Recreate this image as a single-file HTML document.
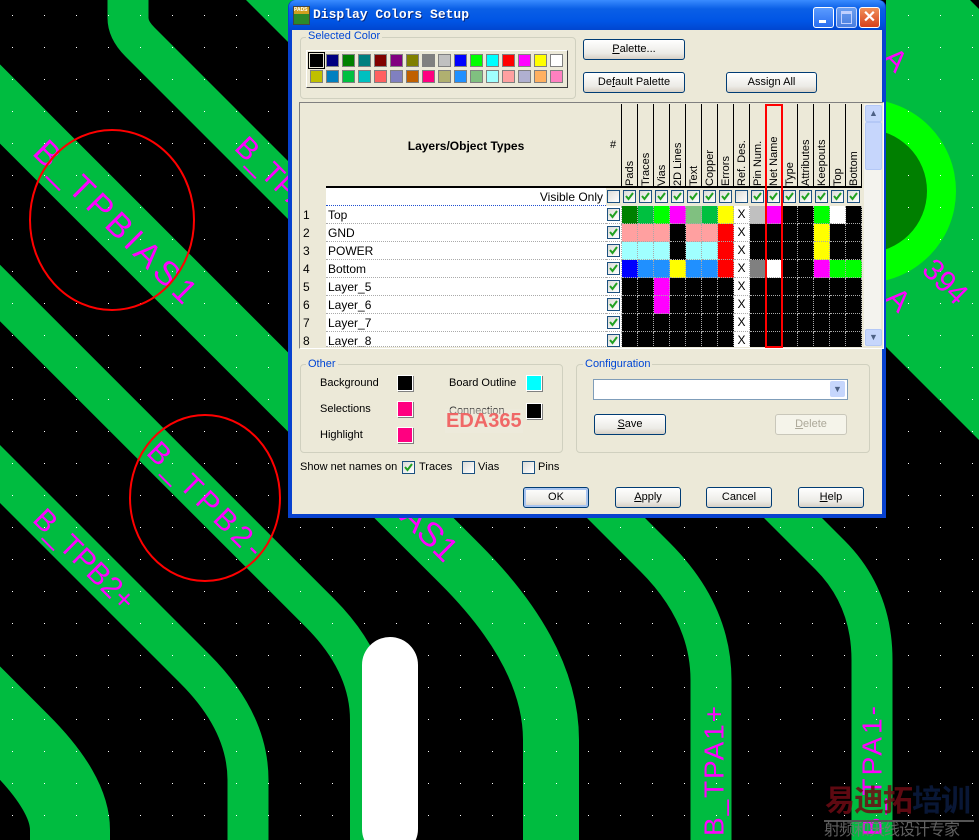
<!DOCTYPE html>
<html><head><meta charset="utf-8"><style>
*{margin:0;padding:0}
body{width:979px;height:840px;overflow:hidden;background:#000;position:relative;font-family:"Liberation Sans","Noto Sans CJK SC",sans-serif;font-size:11px}
.a{position:absolute;white-space:nowrap}
.btn{position:absolute;height:19px;border:1px solid #003c74;border-radius:3px;background:linear-gradient(#fff,#ecebe6 70%,#d6d0c5);font-size:11px;text-align:center;line-height:19px;color:#000}
.sw{position:absolute;width:14px;height:14px;border:1px solid #fff;box-shadow:1px 1px 0 #808080}
.pc{position:absolute;width:13px;height:13px}
.grp{position:absolute;border:1px solid #d0d0bf;border-radius:4px}
.lg{position:absolute;background:#ece9d8;color:#0046d5;padding:0 2px;font-size:11px}
.cb{position:absolute;width:11px;height:11px;border:1px solid #1c5180;background:linear-gradient(135deg,#dcdcd7,#fff)}
.row{position:absolute;left:606px;height:18px;display:flex}
.c{width:16px;height:18px;box-sizing:border-box;border-right:1px dotted #aaa;border-bottom:1px dotted #aaa;position:relative;font-size:12px;text-align:center;line-height:17px}
.vh{position:absolute;top:104px;width:16px;height:82px;writing-mode:vertical-rl;transform:rotate(180deg);font-size:11px;line-height:16px;text-align:left;white-space:nowrap;border-left:1px solid #000;box-sizing:border-box}
</style></head><body>
<svg class="a" style="left:0;top:0" width="979" height="840">
<defs><pattern id="d" x="12" y="15" width="32" height="32" patternUnits="userSpaceOnUse"><rect width="1" height="1" fill="#fff"/></pattern></defs>
<g fill="none" stroke="#00bc40" stroke-linejoin="round">
<path d="M128,-20 L128,18 Q128,30 140,42 L655,557 Q711,613 711,680 L711,860" stroke-width="41"/>
<path d="M-30,74 L460,564 Q551,655 551,740 L551,860" stroke-width="56"/>
<path d="M-30,263 L320,613 Q370,663 370,720 L370,860" stroke-width="40"/>
<path d="M-30,444 L195,669 Q248,722 248,780 L248,860" stroke-width="41"/>
<path d="M-60,663 L20,743 Q70,793 70,830 L70,860" stroke-width="80"/>
<path d="M245,-30 L830,555 Q872,597 872,660 L872,860" stroke-width="41"/>
</g>
<polygon points="886,0 970,0 979,9 979,440 886,347" fill="#00bc40"/>
<circle cx="864" cy="191" r="92" fill="#00ff00"/>
<circle cx="865" cy="191" r="62" fill="#007f00"/>
<rect x="362" y="637" width="56" height="220" rx="28" fill="#fff"/>
<rect width="979" height="840" fill="url(#d)"/>
<g fill="#ff00ff" font-family="Liberation Sans,sans-serif" dominant-baseline="central">
<text x="115" y="222" font-size="34" text-anchor="middle" textLength="215" transform="rotate(45 115 222)">B_TPBIAS1</text>
<text x="205" y="500" font-size="30" text-anchor="middle" textLength="150" transform="rotate(45 205 500)">B_TPB2-</text>
<text x="84" y="560" font-size="30" text-anchor="middle" textLength="130" transform="rotate(45 84 560)">B_TPB2+</text>
<text x="240" y="142" font-size="30" transform="rotate(45 240 142)">B_TPA</text>
<text x="452" y="556" font-size="34" text-anchor="end" transform="rotate(45 452 556)">B_TPBIAS1</text>
<text x="714" y="836" font-size="28" textLength="130" transform="rotate(-90 714 836)">B_TPA1+</text>
<text x="872" y="836" font-size="28" textLength="130" transform="rotate(-90 872 836)">B_TPA1-</text>
<text x="945" y="282" font-size="30" text-anchor="middle" transform="rotate(45 945 282)">394</text>
<text x="895" y="60" font-size="30" text-anchor="middle" transform="rotate(45 895 60)">A</text>
<text x="898" y="300" font-size="30" text-anchor="middle" transform="rotate(45 898 300)">A</text>
</g>
<ellipse cx="112" cy="220" rx="82" ry="90" fill="none" stroke="#f00" stroke-width="2"/>
<ellipse cx="205" cy="498" rx="75" ry="83" fill="none" stroke="#f00" stroke-width="2"/>
</svg>
<div class="a" style="left:825px;top:784px;font-size:30px;font-weight:bold;letter-spacing:-1px;line-height:36px"><span style="color:rgba(110,10,20,.85)">易迪拓</span><span style="color:rgba(10,25,60,.9)">培训</span></div>
<div class="a" style="left:824px;top:820px;width:150px;height:2px;background:#555"></div>
<div class="a" style="left:824px;top:822px;font-size:16px;line-height:18px;color:rgba(120,120,120,.8);letter-spacing:-1px">射频和天线设计专家</div>

<!-- dialog -->
<div class="a" style="left:288px;top:0;width:598px;height:518px;background:#0842cf;border-radius:7px 7px 0 0"></div>
<div class="a" style="left:289px;top:0;width:596px;height:30px;background:linear-gradient(#3a8cff,#0a5fe6 30%,#0055e5 70%,#0046d0);border-radius:7px 7px 0 0"></div>
<div class="a" style="left:293px;top:6px;width:15px;height:17px;background:linear-gradient(#d0a020 40%,#2a8a2a 40%);border:1px solid #444;font-size:5px;color:#fff;font-weight:bold;line-height:7px">PADS</div>
<div class="a" style="left:313px;top:7px;color:#fff;font:bold 13px 'Liberation Mono',monospace;text-shadow:1px 1px 0 #0a2a80">Display Colors Setup</div>
<div class="a" style="left:813px;top:7px;width:19px;height:19px;border:1px solid #fff;border-radius:3px;background:linear-gradient(#5a9bff,#2a6ef0)"><div class="a" style="left:5px;top:12px;width:7px;height:3px;background:#fff"></div></div>
<div class="a" style="left:836px;top:7px;width:19px;height:19px;border:1px solid #c8d8ff;border-radius:3px;background:linear-gradient(#6a9ef0,#4a7ee0)"><div class="a" style="left:4px;top:3px;width:9px;height:9px;border:1px solid #c0d0ff;border-top-width:3px"></div></div>
<div class="a" style="left:859px;top:7px;width:19px;height:19px;border:1px solid #fff;border-radius:3px;background:linear-gradient(#f0905a,#d8401a);color:#fff;font:bold 16px/19px 'Liberation Sans';text-align:center">✕</div>
<div class="a" style="left:292px;top:30px;width:590px;height:484px;background:#ece9d8"></div>

<div class="grp" style="left:300px;top:37px;width:274px;height:60px"></div>
<div class="lg" style="left:306px;top:30px">Selected Color</div>
<div class="a" style="left:306px;top:50px;width:260px;height:36px;border:1px solid #fff;border-right-color:#404040;border-bottom-color:#404040;background:#ece9d8"></div>
<div id="pal"></div>
<div class="btn" style="left:583px;top:39px;width:100px"><u>P</u>alette...</div>
<div class="btn" style="left:583px;top:72px;width:100px">De<u>f</u>ault Palette</div>
<div class="btn" style="left:726px;top:72px;width:89px">Assign All</div>

<!-- grid -->
<div class="a" style="left:299px;top:102px;width:583px;height:245px;border:1px solid #808080;border-right-color:#fff;border-bottom-color:#fff;background:#ece9d8"></div>
<div class="a" style="left:326px;top:104px;width:280px;height:84px;background:#ece9d8;border-bottom:2px solid #000;box-sizing:border-box"></div>
<div class="a" style="left:326px;top:139px;width:280px;text-align:center;font-weight:bold;font-size:12px">Layers/Object Types</div>
<div class="a" style="left:606px;top:104px;width:256px;height:84px;border-bottom:2px solid #000;box-sizing:border-box"></div>
<div class="a" style="left:326px;top:188px;width:280px;height:159px;background:#fff"></div>
<div class="a" style="left:326px;top:190px;width:277px;text-align:right;font-size:12px">Visible Only</div>
<div class="a" style="left:326px;top:205px;width:280px;border-top:1px dotted #2050d0"></div>
<div id="hdr"></div>
<div id="rows"></div>
<div class="a" style="left:765px;top:104px;width:14px;height:240px;border:2px solid #f00"></div>
<div class="a" style="left:864px;top:104px;width:17px;height:242px;background:#f4f3ee"></div>
<div class="a" style="left:865px;top:105px;width:15px;height:15px;border-radius:2px;background:#c6d6fc;border:1px solid #b4c8f6;color:#4d6185;font-size:9px;text-align:center;line-height:15px">▲</div>
<div class="a" style="left:865px;top:122px;width:15px;height:46px;border-radius:2px;background:#c6d6fc;border:1px solid #b4c8f6"></div>
<div class="a" style="left:865px;top:329px;width:15px;height:15px;border-radius:2px;background:#c6d6fc;border:1px solid #b4c8f6;color:#4d6185;font-size:9px;text-align:center;line-height:15px">▼</div>

<!-- other -->
<div class="grp" style="left:300px;top:364px;width:261px;height:87px"></div>
<div class="lg" style="left:306px;top:358px">Other</div>
<div class="a" style="left:320px;top:377px">Background</div>
<div class="a" style="left:320px;top:403px">Selections</div>
<div class="a" style="left:320px;top:429px">Highlight</div>
<div class="a" style="left:449px;top:377px">Board Outline</div>
<div class="a" style="left:449px;top:405px;color:#333">Connection</div>
<div class="sw" style="left:397px;top:375px;background:#000"></div>
<div class="sw" style="left:397px;top:401px;background:#ff0080"></div>
<div class="sw" style="left:397px;top:427px;background:#ff0080"></div>
<div class="sw" style="left:526px;top:375px;background:#00ffff"></div>
<div class="sw" style="left:526px;top:403px;background:#000"></div>
<div class="a" style="left:445px;top:409px;background:rgba(240,235,225,.45);color:rgba(240,90,90,.9);font:bold 20px/24px 'Liberation Sans';padding:0 1px">EDA365</div>

<div class="grp" style="left:576px;top:364px;width:292px;height:87px"></div>
<div class="lg" style="left:583px;top:358px">Configuration</div>
<div class="a" style="left:593px;top:379px;width:253px;height:19px;border:1px solid #7f9db9;background:#fff"></div>
<div class="a" style="left:830px;top:381px;width:15px;height:16px;background:#c6d6fc;border-radius:2px;color:#4d6185;font-size:9px;text-align:center;line-height:16px">▼</div>
<div class="btn" style="left:594px;top:414px;width:70px"><u>S</u>ave</div>
<div class="btn" style="left:775px;top:414px;width:70px;border-color:#c9c7ba;background:#f5f4ea;color:#aca899"><u>D</u>elete</div>

<div class="a" style="left:300px;top:461px">Show net names on</div>
<div class="cb" style="left:402px;top:461px"><svg width="11" height="11" style="position:absolute;left:0;top:0"><path d="M2,5 L4.5,8 L9,2" stroke="#21a121" stroke-width="2" fill="none"/></svg></div>
<div class="a" style="left:419px;top:461px">Traces</div>
<div class="cb" style="left:462px;top:461px"></div>
<div class="a" style="left:478px;top:461px">Vias</div>
<div class="cb" style="left:522px;top:461px"></div>
<div class="a" style="left:538px;top:461px">Pins</div>

<div class="btn" style="left:523px;top:487px;width:64px;box-shadow:inset 0 0 0 2px #a8c4f0">OK</div>
<div class="btn" style="left:615px;top:487px;width:64px"><u>A</u>pply</div>
<div class="btn" style="left:706px;top:487px;width:64px">Cancel</div>
<div class="btn" style="left:798px;top:487px;width:64px"><u>H</u>elp</div>

<script>
var r1=["000000","000080","008000","008080","800000","800080","808000","808080","c0c0c0","0000ff","00ff00","00ffff","ff0000","ff00ff","ffff00","ffffff"];
var r2=["c0c000","0080c0","00c040","00c0c0","ff6060","8080c0","c06000","ff0080","b0b070","2090ff","80c080","a0ffff","ffa0a0","b0b0d0","ffb060","ff80c0"];
var h="";
for(var i=0;i<16;i++){h+='<div class="pc" style="left:'+(310+16*i)+'px;top:54px;background:#'+r1[i]+';'+(i==0?'outline:1px solid #000;outline-offset:1px':'border:1px solid #808080;box-sizing:border-box')+'"></div>';
h+='<div class="pc" style="left:'+(310+16*i)+'px;top:70px;background:#'+r2[i]+';border:1px solid #808080;box-sizing:border-box"></div>';}
document.getElementById('pal').innerHTML=h;
var names=["","Pads","Traces","Vias","2D Lines","Text","Copper","Errors","Ref. Des.","Pin Num.","Net Name","Type","Attributes","Keepouts","Top","Bottom"];
var ck='<svg width="11" height="11" style="position:absolute;left:0;top:0"><path d="M2,5 L4.5,8 L9,2" stroke="#21a121" stroke-width="2" fill="none"/></svg>';
h='<div class="a" style="left:610px;top:139px">#</div>';
for(i=0;i<16;i++){h+='<div class="vh" style="left:'+(606+16*i)+'px;padding-bottom:2px">'+names[i]+'</div>';
h+='<div class="cb" style="left:'+(607+16*i)+'px;top:190px">'+((i==0||i==8)?'':ck)+'</div>';}
document.getElementById('hdr').innerHTML=h;
var K="000",W="fff";
var data=[
["Top",["008000","00c040","00ff00","ff00ff","80c080","00c040","ffff00","X","c0c0c0","ff00ff",K,K,"00ff00",W,K]],
["GND",["ffa0a0","ffa0a0","ffa0a0",K,"ffa0a0","ffa0a0","ff0000","X",K,K,K,K,"ffff00",K,K]],
["POWER",["a0ffff","a0ffff","a0ffff",K,"a0ffff","a0ffff","ff0000","X",K,K,K,K,"ffff00",K,K]],
["Bottom",["0000ff","2090ff","2090ff","ffff00","2090ff","2090ff","ff0000","X","808080",W,K,K,"ff00ff","00ff00","00ff00"]],
["Layer_5",[K,K,"ff00ff",K,K,K,K,"X",K,K,K,K,K,K,K]],
["Layer_6",[K,K,"ff00ff",K,K,K,K,"X",K,K,K,K,K,K,K]],
["Layer_7",[K,K,K,K,K,K,K,"X",K,K,K,K,K,K,K]],
["Layer_8",[K,K,K,K,K,K,K,"X",K,K,K,K,K,K,K]]];
h="";
for(var r=0;r<8;r++){var t=206+18*r;
h+='<div class="a" style="left:303px;top:'+(t+2)+'px;font-size:12px">'+(r+1)+'</div>';
h+='<div class="a" style="left:326px;top:'+t+'px;width:280px;height:'+(r==7?15:18)+'px;border-bottom:1px dotted #aaa;box-sizing:border-box;overflow:hidden"></div>';
h+='<div class="a" style="left:328px;top:'+(t+2)+'px;font-size:12px;height:'+(r==7?13:16)+'px;overflow:hidden">'+data[r][0]+'</div>';
h+='<div class="row" style="top:'+t+'px;height:'+(r==7?15:18)+'px;overflow:hidden"><div class="c" style="background:#fff"><div class="cb" style="left:1px;top:2px">'+ck+'</div></div>';
for(var c=0;c<15;c++){var v=data[r][1][c];
h+= v=="X"?'<div class="c" style="background:#fff">X</div>':'<div class="c" style="background:#'+v+'"></div>';}
h+='</div>';}
document.getElementById('rows').innerHTML=h;
</script>
</body></html>
